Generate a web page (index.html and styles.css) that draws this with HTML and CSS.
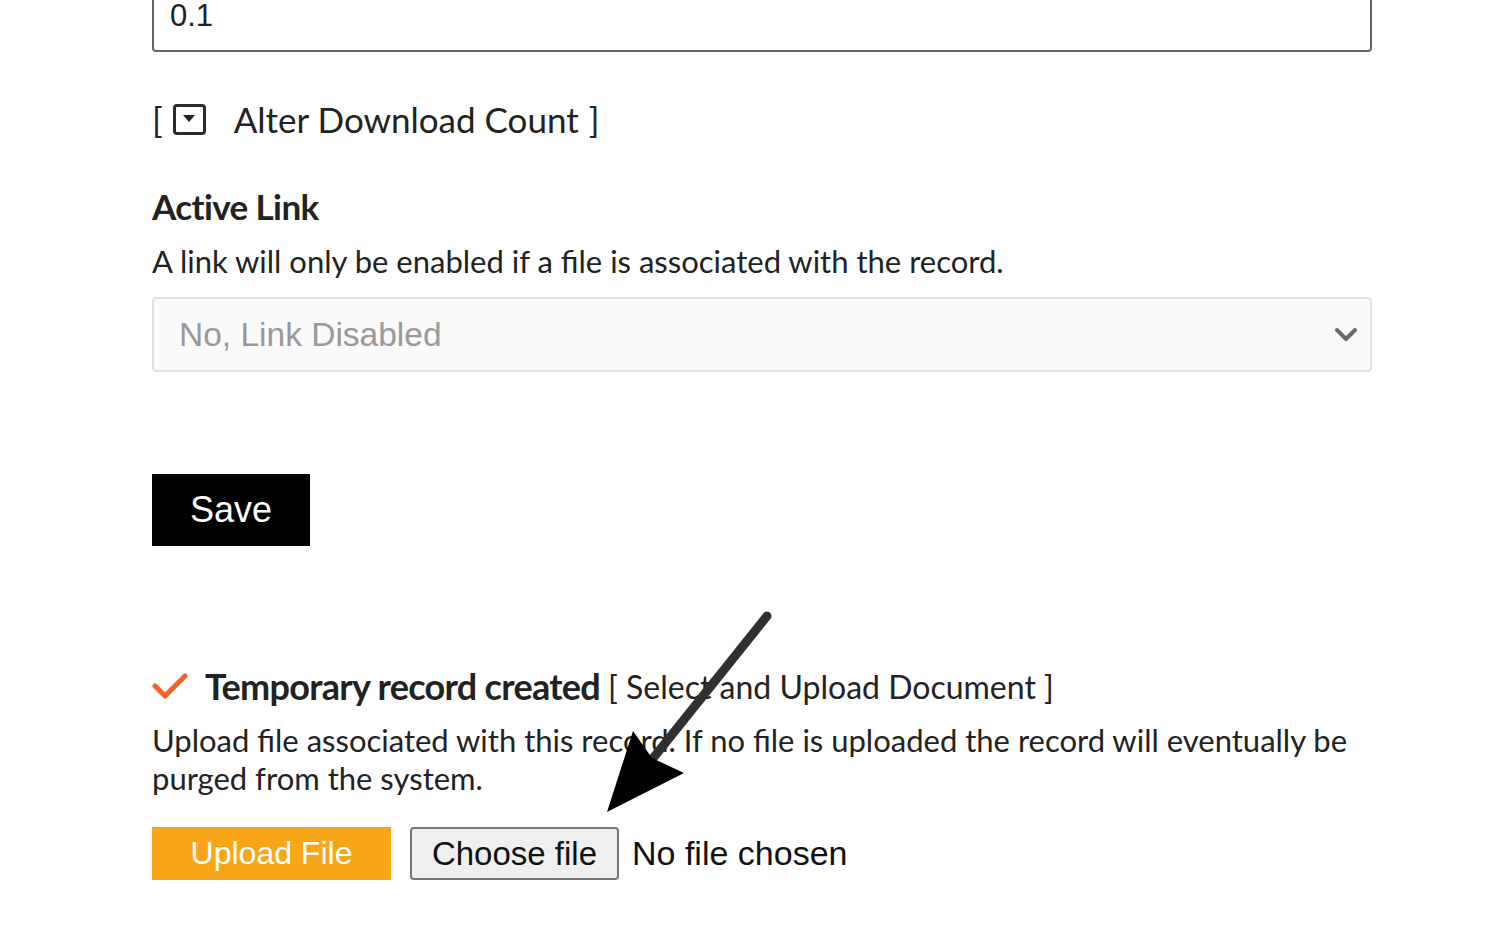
FILE: index.html
```html
<!DOCTYPE html>
<html lang="en">
<head>
    <meta charset="UTF-8">
    <meta name="viewport" content="width=device-width, initial-scale=1.0">
    <title>Edit Record</title>
    <link rel="stylesheet" href="styles.css">
</head>
<body>
    <div class="form">
        <!-- 버전 입력 -->
        <input type="text" class="field" value="0.1">

        <div class="toggle-row">
            <span class="bracket">[</span>
            <span class="toggle-icon">
                <svg width="12" height="8" viewBox="0 0 12 8"><path d="M0 0 L12 0 L6 7 Z" fill="#222"/></svg>
            </span>
            <span class="toggle-label">Alter Download Count</span>
            <span class="bracket">]</span>
        </div>

        <div class="group">
            <h3 class="group-title">Active Link</h3>
            <p class="group-help">A link will only be enabled if a file is associated with the record.</p>
            <div class="select">
                <span>No, Link Disabled</span>
                <svg width="24" height="16" viewBox="0 0 24 16"><path d="M3 3 L12 12 L21 3" fill="none" stroke="#6a6a6a" stroke-width="4" stroke-linecap="round" stroke-linejoin="round"/></svg>
            </div>
        </div>

        <button class="btn-save">Save</button>

        <!-- 업로드 영역 -->
        <div class="upload">
            <div class="upload-head">
                <svg class="check" width="36" height="28" viewBox="0 0 36 28"><path d="M3 14 L13 24 L33 4" fill="none" stroke="#f4622a" stroke-width="5" stroke-linecap="round" stroke-linejoin="round"/></svg>
                <strong>Temporary record created</strong>
                <span class="upload-action">[ Select and Upload Document ]</span>
            </div>
            <p class="upload-help">Upload file associated with this record. If no file is uploaded the record will eventually be purged from the system.</p>
            <div class="upload-row">
                <button class="btn-upload">Upload File</button>
                <span class="file-input">
                    <span class="file-btn">Choose file</span>
                    <span class="file-name">No file chosen</span>
                </span>
            </div>
        </div>
    </div>

    <!-- 화살표 표시 -->
    <svg class="annotation" width="1500" height="952" viewBox="0 0 1500 952">
        <line x1="767" y1="616" x2="650" y2="762" stroke="#303030" stroke-width="9" stroke-linecap="round"/>
        <path d="M607 812 L633 731 L652 758 L684 773 Z" fill="#000"/>
    </svg>
</body>
</html>
```

FILE: styles.css
```css
body {
    margin: 0;
    background: #fff;
    color: #222;
    font-family: Lato, "Open Sans", sans-serif;
    overflow: hidden;
}

.form {
    width: 1220px;
    padding-left: 152px;
}

.field {
    display: block;
    box-sizing: border-box;
    width: 1220px;
    height: 72px;
    margin: -20px 0 0;
    padding: 0 16px;
    border: 2px solid #666;
    border-radius: 4px;
    font-family: "Liberation Sans", Arial, sans-serif;
    font-size: 31px;
    color: #222;
}

.toggle-row {
    display: flex;
    align-items: center;
    height: 40px;
    margin-top: 47px;
    font-size: 35px;
}
.toggle-row .bracket {
    line-height: 40px;
}
.toggle-icon {
    display: flex;
    align-items: center;
    justify-content: center;
    box-sizing: border-box;
    width: 33px;
    height: 31px;
    margin: 0 28px 0 10px;
    border: 3px solid #2a2a2a;
    border-radius: 4px;
}
.toggle-label {
    margin-right: 10px;
}

.group-title {
    margin: 47px 0 0;
    font-size: 35px;
    line-height: 40px;
    font-weight: 700;
    letter-spacing: -0.6px;
}
.group-help {
    margin: 16px 0 0;
    font-size: 31px;
    line-height: 38px;
}

.select {
    display: flex;
    align-items: center;
    justify-content: space-between;
    box-sizing: border-box;
    height: 75px;
    margin-top: 17px;
    padding: 0 12px 0 25px;
    background: #fafafa;
    border: 2px solid #e2e2e2;
    border-radius: 4px;
    font-family: "Liberation Sans", Arial, sans-serif;
    font-size: 33.5px;
    color: #999;
}

.btn-save {
    display: block;
    width: 158px;
    height: 72px;
    margin-top: 102px;
    border: 0;
    background: #000;
    color: #fff;
    font-family: "Liberation Sans", Arial, sans-serif;
    font-size: 36px;
}

.upload {
    margin-top: 120px;
}
.upload-head {
    display: flex;
    align-items: center;
    height: 40px;
    font-size: 32px;
}
.upload-head .check {
    margin-right: 17px;
}
.upload-head strong {
    font-size: 36px;
    letter-spacing: -0.7px;
    margin-right: 8px;
}
.upload-help {
    margin: 15px 0 0;
    font-size: 31px;
    line-height: 38px;
}

.upload-row {
    display: flex;
    align-items: center;
    margin-top: 30px;
    font-family: "Liberation Sans", Arial, sans-serif;
    font-size: 33px;
}
.btn-upload {
    width: 239px;
    height: 53px;
    border: 0;
    background: #f9a51a;
    color: #fff;
    font-family: "Liberation Sans", Arial, sans-serif;
    font-size: 32px;
}
.file-input {
    display: flex;
    align-items: center;
    margin-left: 19px;
    color: #111;
}
.file-btn {
    display: flex;
    align-items: center;
    justify-content: center;
    box-sizing: border-box;
    width: 209px;
    height: 53px;
    border: 2px solid #767676;
    border-radius: 4px;
    background: #efefef;
}
.file-name {
    margin-left: 13px;
    font-size: 34px;
}

.annotation {
    position: absolute;
    top: 0;
    left: 0;
    pointer-events: none;
}
```
